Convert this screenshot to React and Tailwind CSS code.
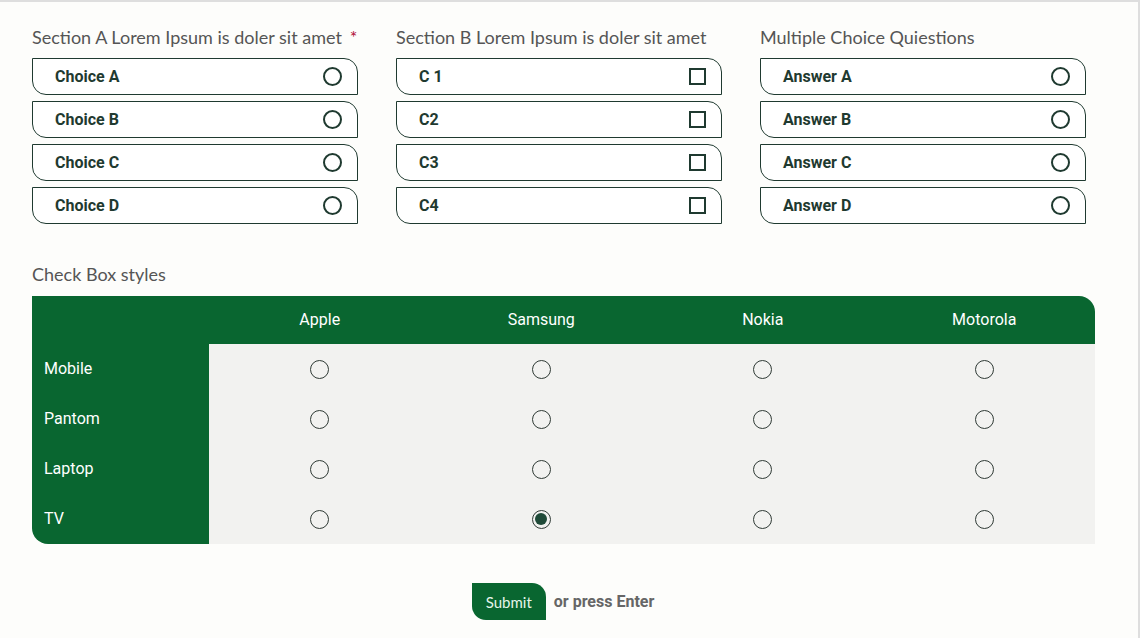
import React from "react";

const sections = [
  { title: "Section A Lorem Ipsum is doler sit amet", required: true, type: "radio", items: ["Choice A", "Choice B", "Choice C", "Choice D"] },
  { title: "Section B Lorem Ipsum is doler sit amet", type: "check", items: ["C 1", "C2", "C3", "C4"] },
  { title: "Multiple Choice Quiestions", type: "radio", items: ["Answer A", "Answer B", "Answer C", "Answer D"] },
];

const brands = ["Apple", "Samsung", "Nokia", "Motorola"];
const devices = ["Mobile", "Pantom", "Laptop", "TV"];

function Radio({ checked, thick }) {
  return (
    <span
      className={`flex h-[19px] w-[19px] items-center justify-center rounded-full ${
        thick ? "border-2 border-[#1f3a30]" : "border-[1.5px] border-[#2f3a35]"
      }`}
    >
      {checked && <span className="h-[12px] w-[12px] rounded-full bg-[#1f4a38]" />}
    </span>
  );
}

function Option({ label, type }) {
  return (
    <div className="flex h-[37px] items-center justify-between rounded-tr-[14px] rounded-bl-[14px] border border-[#1f3a30] bg-white pl-[22px] pr-[15px]">
      <span className="font-['Roboto',sans-serif] text-[16px] font-bold text-[#1f3a30]">{label}</span>
      {type === "radio" ? (
        <Radio thick />
      ) : (
        <span className="h-[17px] w-[17px] border-2 border-[#1f3a30]" />
      )}
    </div>
  );
}

export default function App() {
  return (
    <div className="min-h-[638px] w-[1140px] border-t-2 border-r-2 border-[#dedede] bg-[#fdfdfb] pt-[23px] font-['Lato',sans-serif]">
      <div className="flex gap-[38px] pl-[32px]">
        {sections.map((s) => (
          <div key={s.title} className="w-[326px]">
            <p className="mb-[9px] whitespace-nowrap text-[18px] leading-[24px] text-[#555]">
              {s.title}
              {s.required && <span className="ml-[8px] text-[#b0103a]">*</span>}
            </p>
            <div className="flex flex-col gap-[6px]">
              {s.items.map((it) => (
                <Option key={it} label={it} type={s.type} />
              ))}
            </div>
          </div>
        ))}
      </div>

      <p className="mt-[38px] pl-[32px] text-[18px] leading-[24px] text-[#555]">Check Box styles</p>

      <div className="ml-[32px] mt-[10px] w-[1063px] overflow-hidden rounded-tr-[16px] rounded-bl-[16px] bg-[#096630] font-['Roboto',sans-serif] text-[16px] text-white">
        <div className="grid h-[48px] grid-cols-[177px_1fr_1fr_1fr_1fr] items-center">
          <span />
          {brands.map((b) => (
            <span key={b} className="text-center">{b}</span>
          ))}
        </div>
        {devices.map((d) => (
          <div key={d} className="grid h-[50px] grid-cols-[177px_1fr_1fr_1fr_1fr] items-center">
            <span className="pl-[12px]">{d}</span>
            {brands.map((b) => (
              <span key={b} className="flex h-full items-center justify-center bg-[#f2f2f0]">
                <Radio checked={d === "TV" && b === "Samsung"} />
              </span>
            ))}
          </div>
        ))}
      </div>

      <div className="mt-[39px] flex items-center justify-center gap-[8px] pr-[12px]">
        <button className="h-[37px] rounded-tr-[14px] rounded-bl-[14px] bg-[#096630] px-[14px] pt-[2px] text-[15px] text-[#e6f5ea]">Submit</button>
        <span className="font-['Roboto',sans-serif] text-[16px] font-bold text-[#666]">or press Enter</span>
      </div>
    </div>
  );
}
